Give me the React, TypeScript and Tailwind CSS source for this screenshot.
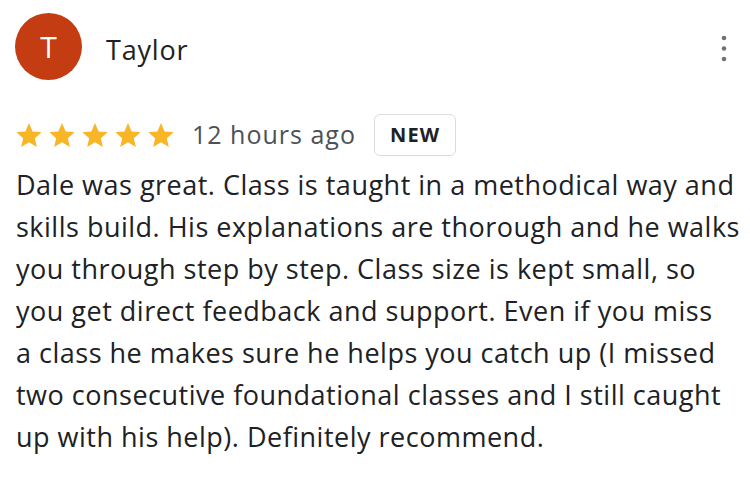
const lines = [
  "Dale was great. Class is taught in a methodical way and",
  "skills build. His explanations are thorough and he walks",
  "you through step by step. Class size is kept small, so",
  "you get direct feedback and support. Even if you miss",
  "a class he makes sure he helps you catch up (I missed",
  "two consecutive foundational classes and I still caught",
  "up with his help). Definitely recommend.",
];

function Star() {
  return (
    <svg viewBox="0 0 24 24" className="h-[28px] w-[28px]" fill="#f8b526">
      <path d="M12 1.8l3.1 7.1 7.7.7-5.8 5.1 1.7 7.6L12 18.3l-6.7 4 1.7-7.6-5.8-5.1 7.7-.7z" />
    </svg>
  );
}

function Dots() {
  return (
    <svg viewBox="0 0 10 30" className="h-[30px] w-[10px]" fill="#6f7378">
      <circle cx="5" cy="4" r="2.3" />
      <circle cx="5" cy="14.5" r="2.3" />
      <circle cx="5" cy="25" r="2.3" />
    </svg>
  );
}

export default function App() {
  return (
    <div
      className="h-[479px] w-[750px] overflow-hidden bg-white text-[#202124]"
      style={{ fontFamily: "'Open Sans', 'Liberation Sans', sans-serif" }}
    >
      <div className="flex items-center pl-[15px] pr-[21px] pt-[13px]">
        <div className="flex h-[67px] w-[67px] items-center justify-center rounded-full bg-[#c43d12] text-[30px] text-white">
          T
        </div>
        <div className="ml-[24px] mt-[6px] text-[27px] leading-none tracking-[0.8px]">Taylor</div>
        <div className="ml-auto mt-[4px]">
          <Dots />
        </div>
      </div>

      <div className="mt-[34px] flex items-center pl-[15px]">
        <div className="flex gap-[5px]">
          <Star />
          <Star />
          <Star />
          <Star />
          <Star />
        </div>
        <span className="ml-[17px] text-[25px] tracking-[1px] text-[#4d5156]">12 hours ago</span>
        <span className="ml-[18px] flex h-[42px] items-center rounded-md border border-[#dadce0] px-[15px] text-[20px] font-bold tracking-[1.2px] text-[#202124]">
          NEW
        </span>
      </div>

      <div className="mt-[8px] pl-[16px] text-[27px] leading-[42px] tracking-[0.5px]">
        {lines.map((l) => (
          <div key={l} className="whitespace-nowrap">
            {l}
          </div>
        ))}
      </div>
    </div>
  );
}
